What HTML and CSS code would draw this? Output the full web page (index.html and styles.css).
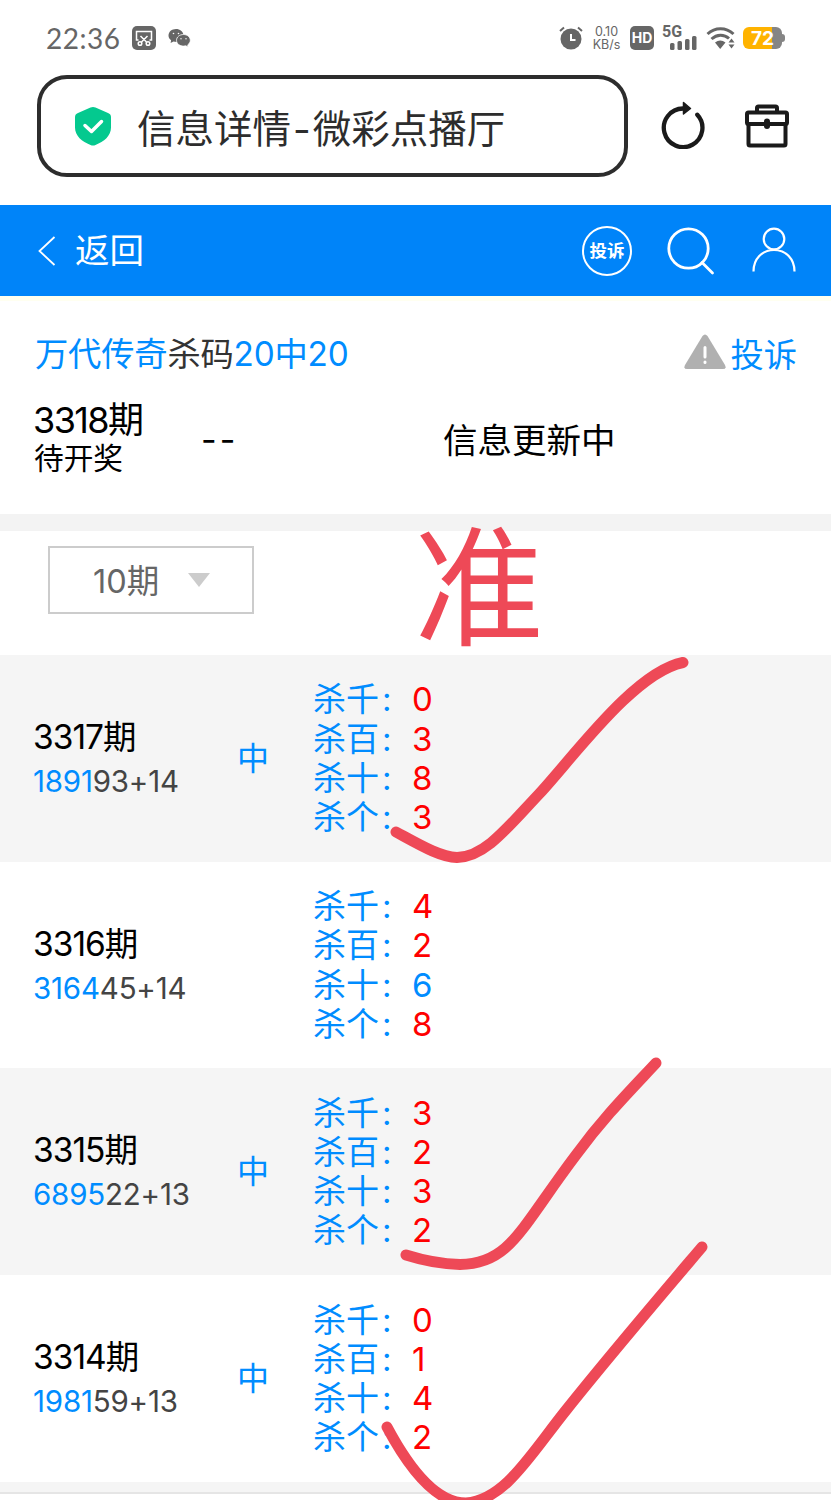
FILE: index.html
```
<!DOCTYPE html>
<html lang="zh-CN">
<head>
    <meta charset="UTF-8">
    <meta name="viewport" content="width=device-width, initial-scale=1.0">
    <title>信息详情-微彩点播厅</title>
    <link rel="stylesheet" href="styles.css">
</head>
<body>
    <div class="page">
        <div class="status">
            <span class="clock">22:36</span>
            <svg class="ic-cut" width="24" height="24" viewBox="0 0 24 24" fill="none" stroke="#fff" stroke-width="1.5">
                <rect width="24" height="24" rx="5" fill="#666" stroke="none"/>
                <path d="M6.500 14H4.500V5.500h15V14h-2M8.500 10l6 6M15.500 10l-6 6"/>
                <circle cx="8" cy="17.500" r="1.800"/>
                <circle cx="16" cy="17.500" r="1.800"/>
            </svg>
            <svg class="ic-wechat" width="23" height="20" viewBox="0 0 23 20">
                <path d="M8 1C3.800 1 .5 3.800.5 7.500c0 2 1 3.600 2.600 4.800L2.600 15l2.900-1.500c1 .3 2 .4 3 .4L15.500 7C15 3.500 12 1 8 1z" fill="#666"/>
                <path d="M15.500 6.500c-3.900 0-7 2.500-7 5.800s3.100 5.800 7 5.800c.8 0 1.600-.1 2.300-.3l2.400 1.300-.5-2.200c1.600-1.100 2.600-2.700 2.600-4.600 0-3.300-2.900-5.800-6.800-5.800z" fill="#666" stroke="#fff" stroke-width=".8"/>
                <g fill="#fff"><circle cx="5.500" cy="5.500" r=".8"/><circle cx="10.500" cy="5.500" r=".8"/><circle cx="13" cy="10.800" r=".7"/><circle cx="18" cy="10.800" r=".7"/></g>
            </svg>
            <span class="spacer"></span>
            <svg class="ic-alarm" width="24" height="24" viewBox="0 0 24 24" fill="none" stroke="#666" stroke-width="2">
                <circle cx="12" cy="13" r="10.500" fill="#666" stroke="none"/>
                <path d="M1 5l4-3.500M23 5l-4-3.500"/>
                <path d="M12 8v6h4.500" stroke="#fff"/>
            </svg>
            <span class="speed">0.10<br>KB/s</span>
            <span class="hd">HD</span>
            <div class="signal">
                <span class="net">5G</span>
                <svg width="28" height="14" viewBox="0 0 28 14" fill="#666">
                    <rect x="0" y="7" width="4.500" height="7" rx="1.500"/>
                    <rect x="7.500" y="5" width="4.500" height="9" rx="1.500"/>
                    <rect x="15" y="3" width="4.500" height="11" rx="1.500"/>
                    <rect x="22" y="0" width="4.500" height="14" rx="1.500"/>
                </svg>
            </div>
            <svg class="ic-wifi" width="29" height="24" viewBox="0 0 29 24" fill="none" stroke="#666" stroke-width="3">
                <path d="M1.500 8C9 1 20 1 27.500 8M5.500 13c5.500-5 12.500-5 17.500-.5"/>
                <path d="M9 16.500c3.500-2.800 7-2.800 10.500 0L14.200 23zM22.500 16.500h6l-3-4zM22.500 18.500h6l-3 4z" fill="#666" stroke="none"/>
            </svg>
            <div class="battery"><span>72</span></div>
        </div>

        <div class="browser">
            <div class="address">
                <svg width="36" height="40" viewBox="0 0 36 40">
                    <path d="M15.500 1.500q2.500-1.200 5 0L33 7q3 1.200 3 4v10.500c0 8.500-7 14-15.500 17.500q-2.500 1-5 0C7 35.500 0 30 0 21.500V11Q0 8.200 3 7z" fill="#04c98f"/>
                    <path d="M10 19.500l6.500 6 10-10" fill="none" stroke="#fff" stroke-width="3.500" stroke-linecap="round" stroke-linejoin="round"/>
                </svg>
                <span>信息详情<i>-</i>微彩点播厅</span>
            </div>
            <svg class="ic-reload" width="44" height="48" viewBox="0 0 44 48" fill="none" stroke="#1a1a1a" stroke-width="4.300">
                <path d="M22 7.500A19.300 19.300 0 1 0 36.300 13.700" stroke-linecap="round"/>
                <path d="M22.500 1.500l7 6-7 5.500z" fill="#1a1a1a" stroke-width="1.500" stroke-linejoin="round"/>
            </svg>
            <svg class="ic-box" width="44" height="44" viewBox="0 0 44 44" fill="none" stroke="#1a1a1a" stroke-width="4" stroke-linejoin="round">
                <rect x="2" y="8.500" width="40" height="11.500" rx="1.500"/>
                <path d="M3.500 20v20q0 1.500 1.500 1.500h34q1.500 0 1.500-1.500V20M12 8V4q0-1.500 1.500-1.500h17Q32 2.500 32 4v4"/>
                <path d="M22 17.500v4.500" stroke-width="6" stroke-linecap="round"/>
            </svg>
        </div>

        <div class="nav">
            <svg class="ic-back" width="18" height="30" viewBox="0 0 18 30" fill="none" stroke="#fff" stroke-width="1.800">
                <path d="M16.500 1L1.500 15l15 14"/>
            </svg>
            <span class="back">返回</span>
            <span class="spacer"></span>
            <span class="complain-circle">投诉</span>
            <svg class="ic-search" width="48" height="48" viewBox="0 0 48 48" fill="none" stroke="#fff" stroke-width="2.800" stroke-linecap="round">
                <circle cx="21.500" cy="21.500" r="19.700"/>
                <path d="M35 35.500L45.500 46"/>
            </svg>
            <svg class="ic-user" width="44" height="46" viewBox="0 0 44 46" fill="none" stroke="#fff" stroke-width="2.200">
                <circle cx="22" cy="12" r="10.300"/>
                <path d="M1.500 44.500C1.500 32 10 23 22 23s20.500 9 20.500 21.500"/>
            </svg>
        </div>

        <div class="info">
            <div class="info-head">
                <h1>万代传奇<em>杀码</em>20中20</h1>
                <svg width="42" height="36" viewBox="0 0 42 36">
                    <path d="M18.500 2Q21 -1 23.500 2L41 31q1.800 4-2 4H3q-3.800 0-2-4z" fill="#b0b0b0"/>
                    <path d="M21 13.500v9.500M21 28v.5" stroke="#fff" stroke-width="3" stroke-linecap="round"/>
                </svg>
                <span class="complain">投诉</span>
            </div>
            <div class="current">
                <div class="current-issue">
                    <p class="big">3318期</p>
                    <p class="wait">待开奖</p>
                </div>
                <div class="dashes">--</div>
                <div class="updating">信息更新中</div>
            </div>
        </div>

        <div class="filter">
            <div class="select"><span>10期</span><i></i></div>
        </div>

        <div class="row">
            <div class="issue"><p>3317期</p><p class="code"><b>1891</b>93+14</p></div>
            <div class="hit">中</div>
            <ul>
                <li>杀千<s>:</s><b>0</b></li>
                <li>杀百<s>:</s><b>3</b></li>
                <li>杀十<s>:</s><b>8</b></li>
                <li>杀个<s>:</s><b>3</b></li>
            </ul>
        </div>
        <div class="row">
            <div class="issue"><p>3316期</p><p class="code"><b>3164</b>45+14</p></div>
            <div class="hit"></div>
            <ul>
                <li>杀千<s>:</s><b>4</b></li>
                <li>杀百<s>:</s><b>2</b></li>
                <li>杀十<s>:</s><b class="miss">6</b></li>
                <li>杀个<s>:</s><b>8</b></li>
            </ul>
        </div>
        <div class="row">
            <div class="issue"><p>3315期</p><p class="code"><b>6895</b>22+13</p></div>
            <div class="hit">中</div>
            <ul>
                <li>杀千<s>:</s><b>3</b></li>
                <li>杀百<s>:</s><b>2</b></li>
                <li>杀十<s>:</s><b>3</b></li>
                <li>杀个<s>:</s><b>2</b></li>
            </ul>
        </div>
        <div class="row">
            <div class="issue"><p>3314期</p><p class="code"><b>1981</b>59+13</p></div>
            <div class="hit">中</div>
            <ul>
                <li>杀千<s>:</s><b>0</b></li>
                <li>杀百<s>:</s><b>1</b></li>
                <li>杀十<s>:</s><b>4</b></li>
                <li>杀个<s>:</s><b>2</b></li>
            </ul>
        </div>
        <div class="bottom"></div>

        <!-- hand-drawn marks on top of the page -->
        <span class="stamp">准</span>
        <svg class="marks" width="831" height="1500" viewBox="0 0 831 1500">
            <path d="M396 832C420 845 440 857 457 857.500C485 857 507 828 540 793C575 755 635 672 683 662.500"/>
            <path d="M406 1255C425 1261 442 1264 460 1264.500C510 1264 520 1229 576 1155C604 1117 628 1093 656 1063"/>
            <path d="M387 1427C403 1457 432 1503 466 1503C505 1500 530 1455 567 1409C610 1355 657 1300 702 1247"/>
        </svg>
    </div>
</body>
</html>
```
FILE: styles.css
```
* {
    box-sizing: border-box;
    margin: 0;
    padding: 0;
}

body {
    font-family: Inter, "Noto Sans CJK SC", sans-serif;
    background-color: #fff;
    color: #000;
}

svg {
    flex: none;
}

.page {
    position: relative;
    width: 831px;
    height: 1500px;
    overflow: hidden;
}

.spacer {
    flex: 1;
}

/* status bar */
.status {
    display: flex;
    align-items: center;
    height: 75px;
    padding: 0 46px 0 46px;
    color: #666;
}

.clock {
    width: 86px;
    font-family: Lato, sans-serif;
    font-size: 28px;
    letter-spacing: 0.5px;
}

.ic-wechat {
    margin-left: 12px;
}

.ic-alarm {
    margin-right: 1px;
}

.speed {
    width: 29px;
    margin-left: 8px;
    font-size: 12.5px;
    line-height: 13px;
    text-align: center;
    white-space: nowrap;
}

.hd {
    width: 24px;
    height: 24px;
    margin-left: 9px;
    border-radius: 5px;
    background-color: #666;
    color: #fff;
    font-size: 14px;
    font-weight: bold;
    line-height: 24px;
    text-align: center;
}

.signal {
    display: flex;
    flex-direction: column;
    width: 36px;
    height: 24px;
    margin-left: 8px;
}

.net {
    height: 10px;
    font-family: Roboto, sans-serif;
    font-size: 16px;
    font-weight: bold;
    line-height: 12px;
}

.signal svg {
    align-self: flex-end;
}

.ic-wifi {
    margin-left: 8px;
}

.battery {
    display: flex;
    align-items: center;
    width: 42px;
    margin-left: 8px;
}

.battery span {
    width: 39px;
    height: 22px;
    border-radius: 6px;
    background: linear-gradient(to right, #ffb300 29px, #858585 29px);
    color: #fff;
    font-size: 19px;
    font-weight: bold;
    line-height: 23px;
    text-align: center;
}

.battery::after {
    content: "";
    width: 3px;
    height: 8px;
    border-radius: 0 3px 3px 0;
    background-color: #858585;
}

/* browser bar */
.browser {
    display: flex;
    align-items: center;
    height: 130px;
    padding: 0 42px 28px 37px;
}

.address {
    display: flex;
    align-items: center;
    gap: 26px;
    width: 591px;
    height: 102px;
    padding-left: 34px;
    border: 4.5px solid #2d2d2d;
    border-radius: 30px;
    color: #2d2d2d;
    font-size: 38.5px;
    white-space: nowrap;
}

.address i {
    margin: 0 2px;
    font-style: normal;
}

.ic-reload {
    margin-left: 33px;
    margin-top: -3px;
}

.ic-box {
    margin-left: 40px;
}

/* page header */
.nav {
    display: flex;
    align-items: center;
    height: 91px;
    padding: 0 35px 0 38px;
    background-color: #0084f9;
    color: #fff;
}

.back {
    margin: 0 0 6px 19px;
    font-size: 34.5px;
}

.complain-circle {
    width: 50px;
    height: 50px;
    border: 2.5px solid #fff;
    border-radius: 50%;
    font-size: 17.5px;
    font-weight: bold;
    line-height: 45px;
    text-align: center;
}

.ic-search {
    margin-left: 35px;
}

.ic-user {
    margin-left: 37px;
    margin-top: -2px;
}

/* current issue */
.info {
    height: 218px;
    padding: 30px 34px 0;
    border-top: 5px solid #fffff0;
}

.info-head {
    display: flex;
    align-items: center;
    height: 42px;
    color: #008cff;
    font-size: 33.3px;
}

.info-head h1 {
    flex: 1;
    margin-top: -1px;
    font-size: 33.3px;
    font-weight: normal;
    letter-spacing: -0.2px;
    text-indent: 1px;
}

.info-head em {
    color: #333;
    font-style: normal;
}

.complain {
    margin-left: 4px;
}

.current {
    display: flex;
    height: 90px;
    margin-top: 25px;
}

.current-issue {
    width: 167px;
}

.big {
    margin-left: -1px;
    font-size: 36px;
    letter-spacing: -1.6px;
    line-height: 45px;
}

.wait {
    font-size: 29.7px;
    line-height: 30px;
}

.dashes {
    width: 242px;
    font-size: 34px;
    letter-spacing: 3px;
    line-height: 83px;
}

.updating {
    font-size: 34.5px;
    line-height: 86px;
}

/* issue count select */
.filter {
    height: 141px;
    padding: 15px 48px;
    border-top: 17px solid #f3f3f3;
}

.select {
    display: flex;
    align-items: center;
    width: 206px;
    height: 68px;
    padding-left: 43px;
    border: 2px solid #ccc;
    color: #666;
    font-size: 32.5px;
}

.select span {
    width: 95px;
    margin-top: -3px;
}

.select i {
    border: 11px solid transparent;
    border-top: 14px solid #ccc;
    border-bottom: none;
}

/* history rows */
.row {
    display: flex;
    align-items: center;
    height: 206.7px;
    padding: 1px 34px 0;
}

.row:nth-child(even) {
    background-color: #f5f5f5;
}

.issue {
    width: 203px;
    font-size: 33.5px;
    letter-spacing: -1px;
    line-height: 44px;
    text-indent: -1px;
}

.code {
    color: #444;
    font-size: 29.5px;
    letter-spacing: -0.2px;
}

.code b {
    color: #008cff;
    font-weight: normal;
}

.hit {
    width: 76px;
    margin-top: -6px;
    color: #008cff;
    font-size: 32px;
}

.row ul {
    list-style: none;
    color: #008cff;
    font-size: 33px;
    line-height: 39.2px;
}

.row li {
    display: flex;
}

.row s {
    width: 33px;
    padding-left: 3px;
    text-decoration: none;
}

.row li b {
    color: #f00;
    font-weight: normal;
}

.row li .miss {
    color: #008cff;
}

.bottom {
    height: 12px;
    border-bottom: 2px solid #e5e5e5;
    background-color: #f5f5f5;
}

.stamp {
    position: absolute;
    left: 414px;
    top: 523px;
    color: #ee4957;
    font-size: 130px;
    line-height: 130px;
}

.marks {
    position: absolute;
    left: 0;
    top: 0;
    fill: none;
    stroke: #ee4957;
    stroke-width: 11;
    stroke-linecap: round;
}
```
